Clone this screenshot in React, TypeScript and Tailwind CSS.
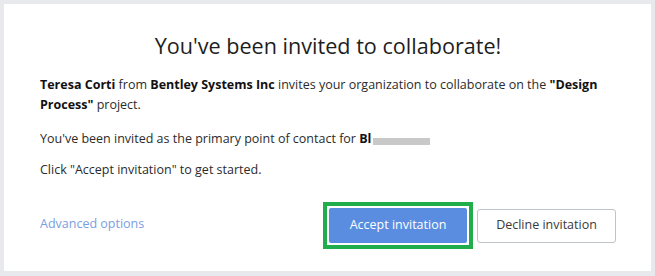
import React from "react";

export default function App() {
  return (
    <div className="w-[655px] h-[276px] bg-[#e8e9ed] pt-[4px] pl-[4px] pr-[4px] pb-[5px]" style={{ fontFamily: '"Open Sans", "Liberation Sans", sans-serif' }}>
      <div className="bg-white h-[267px] w-[647px] pl-[36px] pr-[35px] pt-[27px] flex flex-col">
        <h1 className="text-center text-[21.6px] leading-[30px] text-[#1e1e1e] font-normal">You've been invited to collaborate!</h1>
        <p className="mt-[14px] text-[12.5px] leading-[20px] text-[#2b2b2b]">
          <b className="font-bold text-[#111]">Teresa Corti</b> from <b className="font-bold text-[#111]">Bentley Systems Inc</b> invites your organization to collaborate on the <b className="font-bold text-[#111]">"Design Process"</b> project.
        </p>
        <p className="mt-[14px] text-[12.5px] leading-[20px] text-[#2b2b2b] flex items-center">
          <span>You've been invited as the primary point of contact for&nbsp;</span>
          <b className="font-bold text-[#111]">Bl</b>
          <span className="inline-block w-[57px] h-[7px] bg-[#c8c8c8] mt-[4px] ml-[2px]" />
        </p>
        <p className="mt-[11px] text-[12.5px] leading-[20px] text-[#2b2b2b]">Click "Accept invitation" to get started.</p>
        <div className="mt-[22px] flex items-center justify-between">
          <a className="text-[12.5px] text-[#7b9ee2] leading-[20px] mt-[-4px]">Advanced options</a>
          <div className="flex items-center gap-[4px]">
            <div className="border-[4px] border-[#1fae4b] p-[2px]">
              <button className="w-[138px] h-[35px] bg-[#5a8ddf] text-white text-[12.5px] rounded-[2px]">Accept invitation</button>
            </div>
            <button className="w-[139px] h-[34px] bg-white border border-[#bfc3ca] rounded-[3px] text-[12.5px] text-[#3a3a3a]">Decline invitation</button>
          </div>
        </div>
      </div>
    </div>
  );
}
